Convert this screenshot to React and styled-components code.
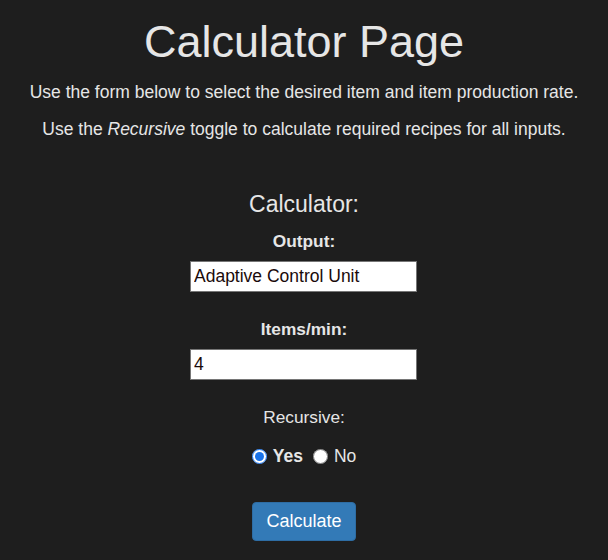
import React, { useState } from 'react';
import styled, { createGlobalStyle } from 'styled-components';

const GlobalStyle = createGlobalStyle`
  html, body {
    margin: 0;
    padding: 0;
    background-color: #1e1e1e;
  }
  body {
    font-family: 'Liberation Sans', Arial, sans-serif;
    color: #e6e6e6;
  }
`;

const Page = styled.div`
  display: flex;
  flex-direction: column;
  align-items: center;
  min-height: 560px;
  padding-top: 16px;
  box-sizing: border-box;
`;

const Title = styled.h1`
  margin: 0;
  font-size: 45px;
  line-height: 52px;
  font-weight: normal;
  text-align: center;
`;

const Intro = styled.p`
  margin: ${(p) => p.$top}px 0 0;
  font-size: 17.5px;
  line-height: 20px;
  text-align: center;
`;

const Form = styled.form`
  display: flex;
  flex-direction: column;
  align-items: center;
  margin-top: 52px;
`;

const FormTitle = styled.h2`
  margin: 0;
  font-size: 23px;
  line-height: 26px;
  font-weight: normal;
`;

const FieldLabel = styled.label`
  display: block;
  margin-top: ${(p) => p.$top}px;
  font-size: 17.3px;
  line-height: 20px;
  font-weight: ${(p) => (p.$bold ? 'bold' : 'normal')};
`;

const TextInput = styled.input`
  box-sizing: border-box;
  width: 227px;
  height: 31px;
  margin: ${(p) => p.$top}px 1px 0 0;
  padding: 0 3px;
  border: 1px solid #767676;
  background: #ffffff;
  color: #1a0a0a;
  font-family: 'Liberation Sans', Arial, sans-serif;
  font-size: 17.5px;
  outline: none;
`;

const RadioRow = styled.div`
  display: flex;
  align-items: center;
  margin-top: 19px;
  font-size: 17.5px;
  line-height: 20px;
`;

const RadioOption = styled.label`
  display: flex;
  align-items: center;
  font-weight: ${(p) => (p.$checked ? 'bold' : 'normal')};
  margin-right: ${(p) => (p.$last ? 0 : 10)}px;

  input {
    width: 15px;
    height: 15px;
    margin: 0 6px 0 0;
    accent-color: #1a73e8;
  }
`;

const CalcButton = styled.button`
  margin-top: 36px;
  width: 104px;
  height: 39px;
  padding: 0 12px;
  border: 1px solid #2e6da4;
  border-radius: 4px;
  background-color: #337ab7;
  color: #ffffff;
  font-family: 'Liberation Sans', Arial, sans-serif;
  font-size: 18px;
  cursor: pointer;
`;

const App = () => {
  const [recursive, setRecursive] = useState(true);

  return (
    <>
      <GlobalStyle />
      <Page>
        <Title>Calculator Page</Title>
        <Intro $top={14}>
          Use the form below to select the desired item and item production rate.
        </Intro>
        <Intro $top={17}>
          Use the <em>Recursive</em> toggle to calculate required recipes for all inputs.
        </Intro>

        <Form onSubmit={(e) => e.preventDefault()}>
          <FormTitle>Calculator:</FormTitle>
          <FieldLabel $bold $top={14} htmlFor="output">Output:</FieldLabel>
          <TextInput id="output" $top={10} defaultValue="Adaptive Control Unit" />
          <FieldLabel $bold $top={27} htmlFor="rate">Items/min:</FieldLabel>
          <TextInput id="rate" $top={10} defaultValue="4" />
          <FieldLabel $top={27}>Recursive:</FieldLabel>
          <RadioRow>
            <RadioOption $checked={recursive}>
              <input type="radio" name="recursive" checked={recursive} onChange={() => setRecursive(true)} />
              Yes
            </RadioOption>
            <RadioOption $checked={!recursive} $last>
              <input type="radio" name="recursive" checked={!recursive} onChange={() => setRecursive(false)} />
              No
            </RadioOption>
          </RadioRow>
          <CalcButton type="submit">Calculate</CalcButton>
        </Form>
      </Page>
    </>
  );
};

export default App;
